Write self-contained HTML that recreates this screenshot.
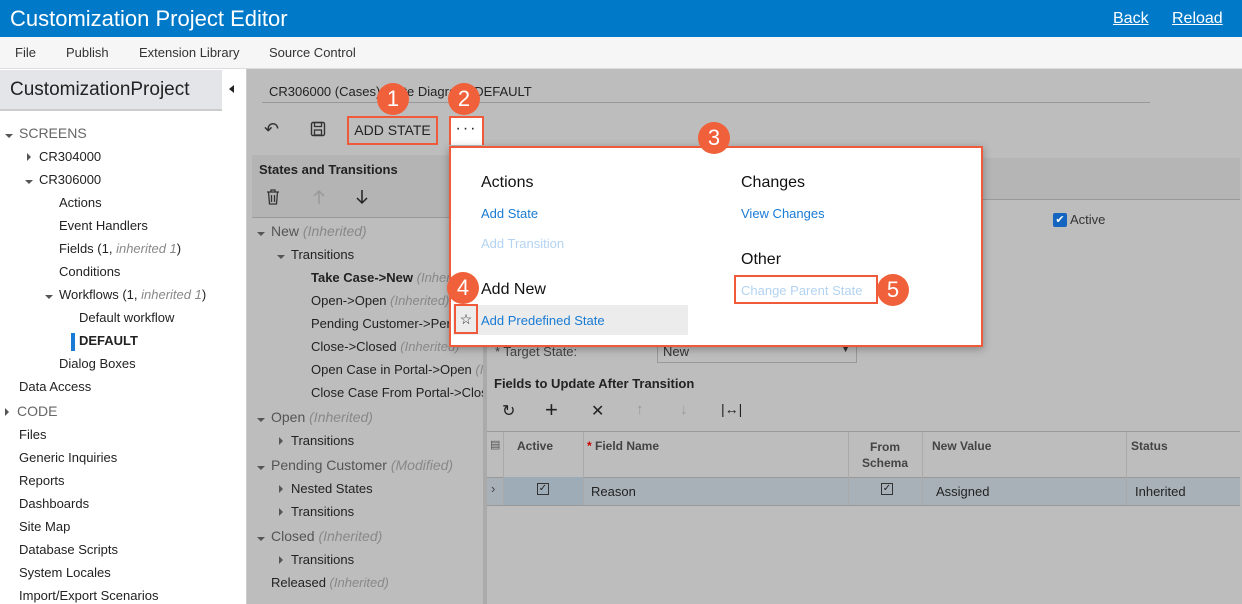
<!DOCTYPE html>
<html><head><meta charset="utf-8"><style>
*{box-sizing:border-box;margin:0;padding:0}
body{width:1242px;height:604px;overflow:hidden;font-family:"Liberation Sans",Arial,sans-serif;background:#bdbdbd;position:relative;font-size:13px;color:#222}
.a{position:absolute;white-space:nowrap}
.top{left:0;top:0;width:1242px;height:37px;background:#0079c9}
.menu{left:0;top:37px;width:1242px;height:32px;background:#f6f6f6;border-bottom:1px solid #ddd}
.left{left:0;top:69px;width:247px;height:535px;background:#fff;border-right:1px solid #ccc}
.lh{left:0;top:70px;width:222px;height:41px;background:#e3e5e8;border-bottom:2px solid #ccc}
.tri-d{display:inline-block;width:0;height:0;border-left:4px solid transparent;border-right:4px solid transparent;border-top:4px solid #555}
.tri-r{display:inline-block;width:0;height:0;border-top:4px solid transparent;border-bottom:4px solid transparent;border-left:4px solid #555}
.gi{color:#888;font-style:italic}
.badge{width:32px;height:32px;border-radius:50%;background:#f0603a;color:#fff;font-size:22px;text-align:center;line-height:32px}
.ob{border:2px solid #ef5a3a}
.lnk{color:#1a7bd4}
.dis{color:#b3d3f2}
</style></head><body>
<div class="a top"></div>
<div class="a" style="left:10px;top:6px;font-size:22px;color:#fff">Customization Project Editor</div>
<div class="a" style="left:1113px;top:10px;font-size:16px;color:#fff;text-decoration:underline">Back</div>
<div class="a" style="left:1172px;top:10px;font-size:16px;color:#fff;text-decoration:underline">Reload</div>
<div class="a menu"></div>
<div class="a" style="left:15px;top:45px;color:#333">File</div>
<div class="a" style="left:66px;top:45px;color:#333">Publish</div>
<div class="a" style="left:139px;top:45px;color:#333">Extension Library</div>
<div class="a" style="left:269px;top:45px;color:#333">Source Control</div>

<div class="a left"></div>
<div class="a lh"></div>
<div class="a" style="left:222px;top:70px;width:21px;height:36px;background:#fff"></div>
<div class="a" style="left:229px;top:85px;border-top:4px solid transparent;border-bottom:4px solid transparent;border-right:5px solid #222"></div>
<div class="a" style="left:10px;top:79px;font-size:19px;color:#222">CustomizationProject</div>
<div class="a" style="left:5px;top:125px;font-size:14px;color:#666"><span class="tri-d" style="margin-right:6px"></span>SCREENS</div>
<div class="a" style="left:27px;top:149px"><span class="tri-r" style="margin-right:8px"></span>CR304000</div>
<div class="a" style="left:25px;top:172px"><span class="tri-d" style="margin-right:6px"></span>CR306000</div>
<div class="a" style="left:59px;top:195px">Actions</div>
<div class="a" style="left:59px;top:218px">Event Handlers</div>
<div class="a" style="left:59px;top:241px">Fields (1, <span class="gi">inherited 1</span>)</div>
<div class="a" style="left:59px;top:264px">Conditions</div>
<div class="a" style="left:45px;top:287px"><span class="tri-d" style="margin-right:6px"></span>Workflows (1, <span class="gi">inherited 1</span>)</div>
<div class="a" style="left:79px;top:310px">Default workflow</div>
<div class="a" style="left:71px;top:333px;width:4px;height:18px;background:#1a7bd4"></div>
<div class="a" style="left:79px;top:333px;font-weight:bold">DEFAULT</div>
<div class="a" style="left:59px;top:356px">Dialog Boxes</div>
<div class="a" style="left:19px;top:379px">Data Access</div>
<div class="a" style="left:5px;top:403px;font-size:14px;color:#666"><span class="tri-r" style="margin-right:8px"></span>CODE</div>
<div class="a" style="left:19px;top:427px">Files</div>
<div class="a" style="left:19px;top:450px">Generic Inquiries</div>
<div class="a" style="left:19px;top:473px">Reports</div>
<div class="a" style="left:19px;top:496px">Dashboards</div>
<div class="a" style="left:19px;top:519px">Site Map</div>
<div class="a" style="left:19px;top:542px">Database Scripts</div>
<div class="a" style="left:19px;top:565px">System Locales</div>
<div class="a" style="left:19px;top:588px">Import/Export Scenarios</div>

<!-- right -->
<div class="a" style="left:269px;top:84px;color:#222">CR306000 (Cases) State Diagram: DEFAULT</div>
<div class="a" style="left:262px;top:102px;width:888px;height:1px;background:#999"></div>
<div class="a" style="left:264px;top:119px;font-size:18px;color:#333">&#x21B6;</div>
<svg class="a" style="left:310px;top:121px" width="16" height="16" viewBox="0 0 16 16"><rect x="1.5" y="1.5" width="13" height="13" rx="1.5" fill="none" stroke="#333" stroke-width="1.4"/><rect x="4.5" y="1.5" width="7" height="4" fill="none" stroke="#333" stroke-width="1.3"/><rect x="4.5" y="9" width="7" height="5" fill="none" stroke="#333" stroke-width="1.3"/></svg>
<div class="a ob" style="left:347px;top:116px;width:91px;height:29px;font-size:14px;line-height:25px;text-align:center;color:#222">ADD STATE</div>
<div class="a" style="left:449px;top:116px;width:35px;height:29px;background:#fff;border:2px solid #ef5a3a;border-bottom:none;text-align:center;font-size:16px;line-height:22px;letter-spacing:2px">···</div>

<div class="a" style="left:252px;top:155px;width:231px;height:63px;background:#b4b4b4;border-bottom:1px solid #999"></div>
<div class="a" style="left:259px;top:162px;font-weight:bold;color:#222">States and Transitions</div>
<svg class="a" style="left:266px;top:189px" width="14" height="16" viewBox="0 0 14 16"><path d="M1 3h12M5 3V1h4v2M2.5 3l1 12h7l1-12M5.5 6v7M8.5 6v7" fill="none" stroke="#333" stroke-width="1.3"/></svg>
<svg class="a" style="left:312px;top:189px" width="14" height="16" viewBox="0 0 14 16"><path d="M7 15V2M2 7l5-5 5 5" fill="none" stroke="#999" stroke-width="1.5"/></svg>
<svg class="a" style="left:355px;top:189px" width="14" height="16" viewBox="0 0 14 16"><path d="M7 1v13M2 9l5 5 5-5" fill="none" stroke="#222" stroke-width="1.5"/></svg>
<div class="a" style="left:483px;top:155px;width:4px;height:449px;background:#aaa"></div>

<div class="a" style="left:257px;top:223px;font-size:14px;color:#555"><span class="tri-d" style="margin-right:6px"></span>New <span class="gi">(Inherited)</span></div>
<div class="a" style="left:277px;top:247px"><span class="tri-d" style="margin-right:6px"></span>Transitions</div>
<div class="a" style="left:311px;top:270px;font-weight:bold">Take Case-&gt;New <span class="gi" style="font-weight:normal">(Inherited)</span></div>
<div class="a" style="left:311px;top:293px">Open-&gt;Open <span class="gi">(Inherited)</span></div>
<div class="a" style="left:311px;top:316px">Pending Customer-&gt;Pending</div>
<div class="a" style="left:311px;top:339px">Close-&gt;Closed <span class="gi">(Inherited)</span></div>
<div class="a" style="left:311px;top:362px;width:172px;overflow:hidden">Open Case in Portal-&gt;Open <span class="gi">(I</span></div>
<div class="a" style="left:311px;top:385px;width:172px;overflow:hidden">Close Case From Portal-&gt;Closed</div>
<div class="a" style="left:257px;top:409px;font-size:14px;color:#555"><span class="tri-d" style="margin-right:6px"></span>Open <span class="gi">(Inherited)</span></div>
<div class="a" style="left:279px;top:433px"><span class="tri-r" style="margin-right:8px"></span>Transitions</div>
<div class="a" style="left:257px;top:457px;font-size:14px;color:#555"><span class="tri-d" style="margin-right:6px"></span>Pending Customer <span class="gi">(Modified)</span></div>
<div class="a" style="left:279px;top:481px"><span class="tri-r" style="margin-right:8px"></span>Nested States</div>
<div class="a" style="left:279px;top:504px"><span class="tri-r" style="margin-right:8px"></span>Transitions</div>
<div class="a" style="left:257px;top:528px;font-size:14px;color:#555"><span class="tri-d" style="margin-right:6px"></span>Closed <span class="gi">(Inherited)</span></div>
<div class="a" style="left:279px;top:552px"><span class="tri-r" style="margin-right:8px"></span>Transitions</div>
<div class="a" style="left:271px;top:575px">Released <span class="gi">(Inherited)</span></div>

<div class="a" style="left:487px;top:158px;width:753px;height:42px;background:#b5b5b5;border-bottom:1px solid #999"></div>
<div class="a" style="left:1053px;top:213px;width:14px;height:14px;background:#1565c0;border-radius:2px;color:#fff;font-size:11px;line-height:14px;text-align:center">✔</div>
<div class="a" style="left:1070px;top:212px;color:#333">Active</div>
<div class="a" style="left:495px;top:344px;color:#444">* Target State:</div>
<div class="a" style="left:657px;top:339px;width:200px;height:24px;border:1px solid #999;padding:4px 5px;color:#333">New<span style="position:absolute;right:6px;top:4px;font-size:9px">▼</span></div>
<div class="a" style="left:494px;top:376px;font-weight:bold;color:#222">Fields to Update After Transition</div>
<div class="a" style="left:502px;top:401px;font-size:16px">&#x21BB;</div>
<div class="a" style="left:545px;top:398px;font-size:22px;line-height:24px">+</div>
<div class="a" style="left:591px;top:401px;font-size:16px">✕</div>
<div class="a" style="left:636px;top:401px;font-size:15px;color:#999">↑</div>
<div class="a" style="left:680px;top:401px;font-size:15px;color:#999">↓</div>
<div class="a" style="left:721px;top:401px;font-size:14px">|↔|</div>
<div class="a" style="left:487px;top:431px;width:753px;height:75px;border-top:1px solid #999;border-bottom:1px solid #999"></div>
<div class="a" style="left:487px;top:477px;width:753px;height:28px;background:#a9b1b8;border-top:1px solid #999"></div>
<div class="a" style="left:503px;top:477px;width:80px;height:28px;background:#9eacb8"></div>
<div class="a" style="left:503px;top:432px;width:1px;height:73px;background:#aaa"></div>
<div class="a" style="left:583px;top:432px;width:1px;height:73px;background:#aaa"></div>
<div class="a" style="left:848px;top:432px;width:1px;height:73px;background:#aaa"></div>
<div class="a" style="left:922px;top:432px;width:1px;height:73px;background:#aaa"></div>
<div class="a" style="left:1126px;top:432px;width:1px;height:73px;background:#aaa"></div>
<div class="a" style="left:490px;top:438px;font-size:11px;color:#555">▤</div>
<div class="a" style="left:517px;top:439px;font-size:12px;font-weight:bold;color:#444">Active</div>
<div class="a" style="left:587px;top:439px;font-size:12px;font-weight:bold;color:#444"><span style="color:#c00">*</span> Field Name</div>
<div class="a" style="left:848px;top:439px;width:74px;text-align:center;font-size:12px;font-weight:bold;color:#444;line-height:16px">From<br>Schema</div>
<div class="a" style="left:932px;top:439px;font-size:12px;font-weight:bold;color:#444">New Value</div>
<div class="a" style="left:1131px;top:439px;font-size:12px;font-weight:bold;color:#444">Status</div>
<div class="a" style="left:491px;top:481px;color:#444">›</div>
<div class="a" style="left:537px;top:483px;width:12px;height:12px;border:1px solid #333;font-size:10px;line-height:10px;text-align:center">✓</div>
<div class="a" style="left:591px;top:484px">Reason</div>
<div class="a" style="left:881px;top:483px;width:12px;height:12px;border:1px solid #333;font-size:10px;line-height:10px;text-align:center">✓</div>
<div class="a" style="left:936px;top:484px">Assigned</div>
<div class="a" style="left:1135px;top:484px">Inherited</div>

<!-- popup -->
<div class="a" style="left:449px;top:146px;width:534px;height:201px;background:#fff;border:2px solid #ef5a3a;box-shadow:0 2px 8px rgba(0,0,0,.3)"></div>
<div class="a" style="left:481px;top:174px;font-size:16px;color:#111">Actions</div>
<div class="a lnk" style="left:481px;top:206px">Add State</div>
<div class="a dis" style="left:481px;top:236px">Add Transition</div>
<div class="a" style="left:481px;top:281px;font-size:16px;color:#111">Add New</div>
<div class="a" style="left:453px;top:305px;width:235px;height:30px;background:#ececec"></div>
<div class="a ob" style="left:454px;top:304px;width:24px;height:30px;text-align:center;line-height:26px;font-size:14px">☆</div>
<div class="a lnk" style="left:481px;top:313px">Add Predefined State</div>
<div class="a" style="left:741px;top:174px;font-size:16px;color:#111">Changes</div>
<div class="a lnk" style="left:741px;top:206px">View Changes</div>
<div class="a" style="left:741px;top:251px;font-size:16px;color:#111">Other</div>
<div class="a ob" style="left:734px;top:275px;width:144px;height:29px"></div>
<div class="a dis" style="left:741px;top:283px">Change Parent State</div>

<div class="a badge" style="left:377px;top:83px">1</div>
<div class="a badge" style="left:448px;top:83px">2</div>
<div class="a badge" style="left:698px;top:122px">3</div>
<div class="a badge" style="left:447px;top:272px">4</div>
<div class="a badge" style="left:877px;top:274px">5</div>
</body></html>
